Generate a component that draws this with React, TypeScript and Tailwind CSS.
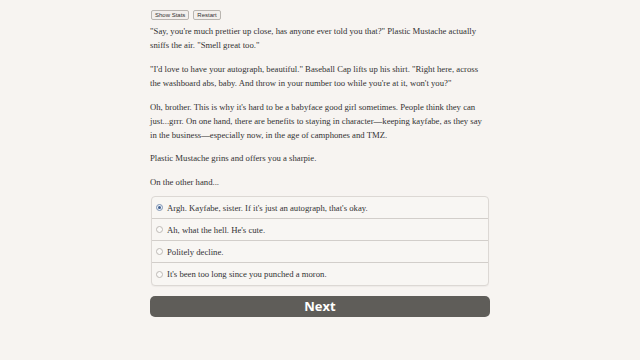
import React from "react";

const choices = [
  "Argh. Kayfabe, sister. If it's just an autograph, that's okay.",
  "Ah, what the hell. He's cute.",
  "Politely decline.",
  "It's been too long since you punched a moron.",
];

const App = () => {
  return (
    <div className="w-[640px] h-[360px] bg-[#f7f4f1] overflow-hidden">
      <div className="w-[340px] mx-auto pt-[10px] font-['Liberation_Serif',serif] text-[8.7px] leading-[14px] text-[#333]">

        <div className="flex gap-[4px] ml-[1px] mb-[4px]">
          <button className="h-[10px] px-[3px] border border-[#b9b5b0] rounded-[2px] bg-[#f2efec] font-['Liberation_Sans',sans-serif] text-[6px] leading-[8px] text-[#333]">
            Show Stats
          </button>
          <button className="h-[10px] px-[3px] border border-[#b9b5b0] rounded-[2px] bg-[#f2efec] font-['Liberation_Sans',sans-serif] text-[6px] leading-[8px] text-[#333]">
            Restart
          </button>
        </div>

        <p className="mb-[10px]">
          "Say, you're much prettier up close, has anyone ever told you that?" Plastic Mustache actually sniffs the air. "Smell great too."
        </p>
        <p className="mb-[10px]">
          "I'd love to have your autograph, beautiful." Baseball Cap lifts up his shirt. "Right here, across the washboard abs, baby. And throw in your number too while you're at it, won't you?"
        </p>
        <p className="mb-[9px]">
          Oh, brother. This is why it's hard to be a babyface good girl sometimes. People think they can just...grrr. On one hand, there are benefits to staying in character—keeping kayfabe, as they say in the business—especially now, in the age of camphones and TMZ.
        </p>
        <p className="mb-[10px]">Plastic Mustache grins and offers you a sharpie.</p>
        <p className="mb-[7px]">On the other hand...</p>

        <div className="mx-[1px] border border-[#dcd8d4] rounded-[4px] bg-[#f8f6f3] shadow-[0_1px_1px_rgba(0,0,0,0.04)]">
          {choices.map((c, i) => (
            <div
              key={i}
              className={
                "h-[22px] flex items-center gap-[4px] px-[4px] " +
                (i < choices.length - 1 ? "border-b border-[#d2ceca]" : "")
              }
            >
              <span
                className={
                  "w-[7px] h-[7px] rounded-full border flex items-center justify-center " +
                  (i === 0 ? "border-[#7d93b3] bg-[#eef2f8]" : "border-[#bdb9b5] bg-[#fbfaf8]")
                }
              >
                {i === 0 && <span className="w-[3px] h-[3px] rounded-full bg-[#3f5f8f]" />}
              </span>
              <span>{c}</span>
            </div>
          ))}
        </div>

        <button className="mt-[10px] w-full h-[21px] rounded-[5px] bg-[#5f5d59] text-white font-['Open_Sans',sans-serif] font-bold text-[13px] leading-[21px]">
          Next
        </button>

      </div>
    </div>
  );
};

export default App;
